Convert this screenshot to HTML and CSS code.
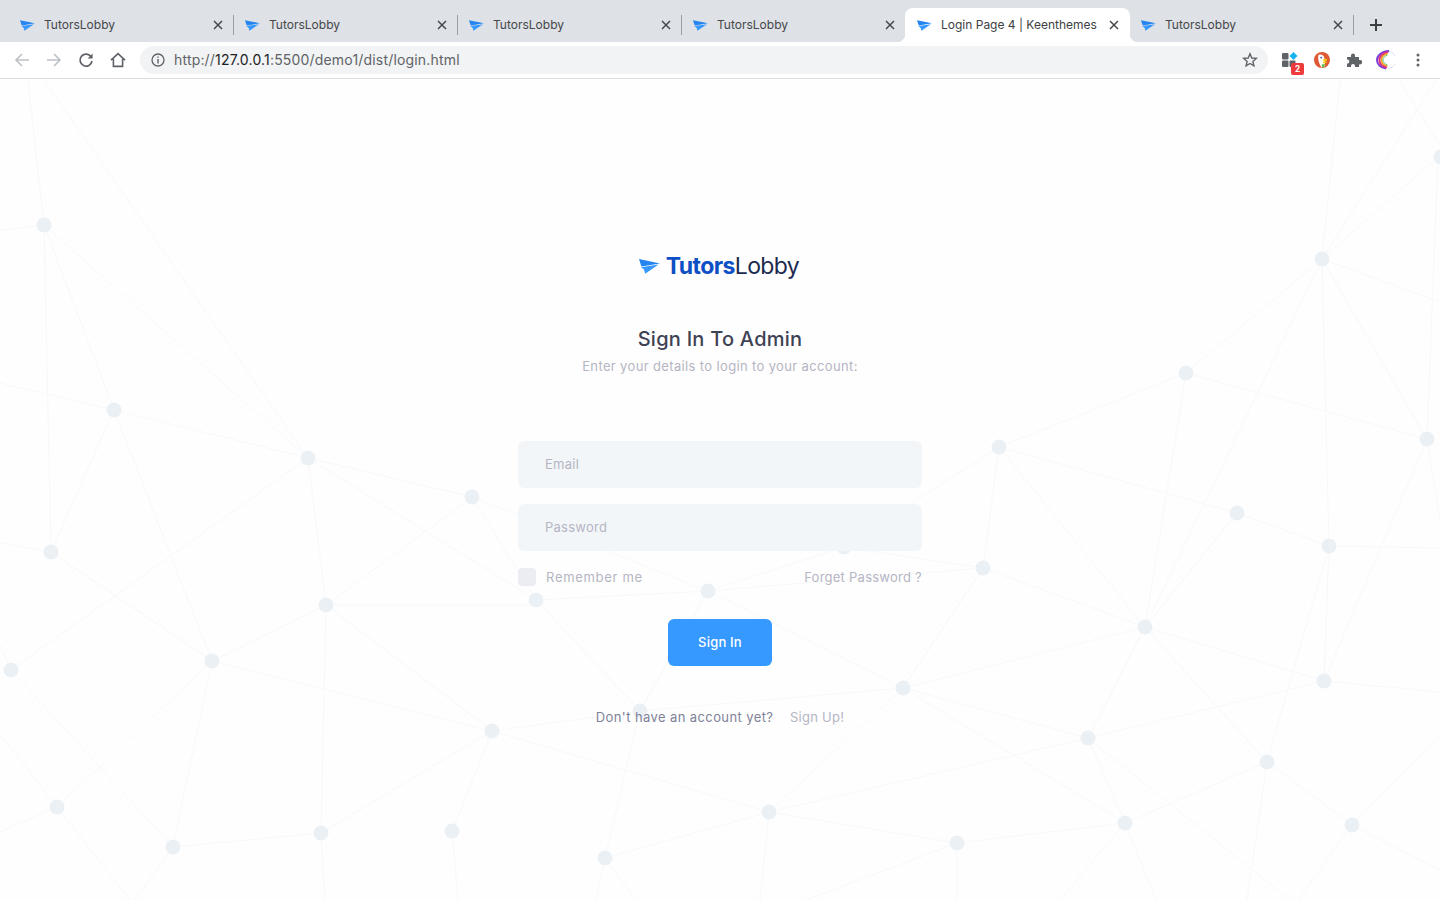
FILE: index.html
```html
<!DOCTYPE html>
<html lang="en">
  <head>
    <meta charset="UTF-8" />
    <title>Login Page 4 | Keenthemes</title>
    <link rel="stylesheet" href="styles.css">
  </head>
  <body>
    <svg width="0" height="0" class="defs">
      <symbol id="plane" viewBox="0 0 21 15">
        <path d="M0 0 L21 4.4 L2.4 7.6 Z" fill="#2484f0"/>
        <path d="M2 8.3 L19.5 5.6 L6.2 14.8 L5 10.6 Z" fill="#3699ff"/>
      </symbol>
      <symbol id="x" viewBox="0 0 10 10">
        <path d="M1 1 L9 9 M9 1 L1 9" stroke="#45474a" stroke-width="1.5" fill="none"/>
      </symbol>
    </svg>

    <div class="tabstrip">
      <div class="tab"><svg class="fav"><use href="#plane"/></svg><span class="tab-title">TutorsLobby</span><svg class="tab-x"><use href="#x"/></svg></div>
      <div class="tab"><svg class="fav"><use href="#plane"/></svg><span class="tab-title">TutorsLobby</span><svg class="tab-x"><use href="#x"/></svg></div>
      <div class="tab"><svg class="fav"><use href="#plane"/></svg><span class="tab-title">TutorsLobby</span><svg class="tab-x"><use href="#x"/></svg></div>
      <div class="tab"><svg class="fav"><use href="#plane"/></svg><span class="tab-title">TutorsLobby</span><svg class="tab-x"><use href="#x"/></svg></div>
      <div class="tab active"><svg class="fav"><use href="#plane"/></svg><span class="tab-title">Login Page 4 | Keenthemes</span><svg class="tab-x"><use href="#x"/></svg></div>
      <div class="tab last"><svg class="fav"><use href="#plane"/></svg><span class="tab-title">TutorsLobby</span><svg class="tab-x"><use href="#x"/></svg></div>
      <svg class="newtab" viewBox="0 0 12 12"><path d="M6 0 V12 M0 6 H12" stroke="#3c4043" stroke-width="2"/></svg>
    </div>

    <div class="toolbar">
      <svg class="tool" viewBox="0 0 16 16"><path d="M15 8 H2 M8 2 L2 8 L8 14" stroke="#bdc1c6" stroke-width="1.6" fill="none"/></svg>
      <svg class="tool" viewBox="0 0 16 16"><path d="M1 8 H14 M8 2 L14 8 L8 14" stroke="#bdc1c6" stroke-width="1.6" fill="none"/></svg>
      <svg class="tool" viewBox="0 0 16 16"><path d="M13.2 5 A6 6 0 1 0 14 9" stroke="#5f6368" stroke-width="1.7" fill="none"/><path d="M14.6 1.4 V6.4 H9.6 Z" fill="#5f6368"/></svg>
      <svg class="tool" viewBox="0 0 16 16"><path d="M1 8.2 L8 1.6 L15 8.2 M3.4 7 V14.4 H12.6 V7" stroke="#5f6368" stroke-width="1.6" fill="none"/></svg>
      <div class="omnibox">
        <svg class="info" viewBox="0 0 14 14"><circle cx="7" cy="7" r="6" stroke="#5f6368" stroke-width="1.3" fill="none"/><path d="M7 6 V10.4 M7 3.4 V4.8" stroke="#5f6368" stroke-width="1.4"/></svg>
        <span class="url">http://<b>127.0.0.1</b>:5500/demo1/dist/login.html</span>
        <svg class="star" viewBox="0 0 16 16"><path d="M8 1.8 L9.8 6 L14.3 6.4 L10.9 9.4 L11.9 13.8 L8 11.5 L4.1 13.8 L5.1 9.4 L1.7 6.4 L6.2 6 Z" stroke="#5f6368" stroke-width="1.4" fill="none"/></svg>
      </div>
      <div class="exts">
        <div class="ext">
          <svg viewBox="0 0 16 16"><rect x="0" y="1" width="6.5" height="6.5" rx="1" fill="#5f6368"/><rect x="0" y="8.5" width="6.5" height="6.5" rx="1" fill="#5f6368"/><rect x="7.5" y="8.5" width="6" height="6.5" rx="1" fill="#5f6368"/><path d="M11.5 0 L15.5 4 L11.5 8 L7.5 4 Z" fill="#19b5f1"/></svg>
          <span class="badge">2</span>
        </div>
        <div class="ext">
          <svg viewBox="0 0 16 16"><circle cx="8" cy="8" r="8" fill="#de5833"/><path d="M4.5 2.8 C8 1.6 10.4 3.8 10.4 6.6 L11 14.6 L7.4 15.6 C5.8 12.6 3.2 8 4.5 2.8 Z" fill="#fff"/><circle cx="7.2" cy="5.6" r="0.9" fill="#2d4f8e"/><path d="M8.6 7.6 L13 6.8 L13 8.4 L9.4 9.2 Z M8.8 9.8 L12.6 9.4 L12.6 10.8 L9.4 11.4 Z" fill="#fdd20a"/><path d="M7.6 12.4 L10.6 12 L10.6 15 L8.2 15.6 Z" fill="#65bc46"/></svg>
        </div>
        <div class="ext">
          <svg viewBox="0 0 16 16"><path d="M1 5 H5 V3.4 A2 2 0 0 1 9 3.4 V5 H13 V8 H14 A2.2 2.2 0 0 1 14 12.4 H13 V15 H9 V14 A2 2 0 0 0 5 14 V15 H1 V11.6 H2 A2.2 2.2 0 0 0 2 7.6 H1 Z" fill="#5f6368"/></svg>
        </div>
        <div class="ext">
          <svg class="swirl" viewBox="0 0 20 20"><path d="M13 1 A9 9 0 0 1 19 6" stroke="#d8e4f6" stroke-width="1" fill="none"/><path d="M12 18.5 A9 9 0 0 0 19 14" stroke="#e6e2f6" stroke-width="1" fill="none"/><path d="M13 1 C5 1.5 1 6 1 10 C1 14 4.5 18 10 18.5" stroke="#7a3fd6" stroke-width="2" fill="none"/><path d="M12 2 C6.5 3.5 3.4 6.6 3.4 10 C3.4 13.4 6 16.4 11 17.4" stroke="#e0347a" stroke-width="2" fill="none"/><path d="M11.5 3.6 C7.4 5 5.4 7.4 5.4 10 C5.4 12.6 7.4 15 11.4 16" stroke="#f0a020" stroke-width="1.6" fill="none"/><path d="M11.5 5 C8.6 6.2 7 8 7 10 C7 12 8.6 13.8 11.4 14.8" stroke="#62c46a" stroke-width="1" fill="none"/></svg>
        </div>
        <div class="ext">
          <svg viewBox="0 0 16 16"><circle cx="8" cy="3" r="1.5" fill="#5f6368"/><circle cx="8" cy="8" r="1.5" fill="#5f6368"/><circle cx="8" cy="13" r="1.5" fill="#5f6368"/></svg>
        </div>
      </div>
    </div>

    <div class="page">
      <svg class="network" viewBox="0 0 1440 821">
        <g class="links" transform="translate(0 -79)">
          <path d="M28 80L44 225M44 80L308 458M0 230L44 225M44 225L308 458M44 225L114 410M44 225L51 552M114 410L51 552M114 410L308 458M0 383L114 410M114 410L212 661M308 458L11 670M308 458L472 497M308 458L326 605M308 458L536 600M472 497L326 605M472 497L536 600M472 497L708 591M0 543L51 552M51 552L212 661M326 605L212 661M326 605L536 605M326 605L321 833M326 605L492 731M536 600L708 591M536 600L640 711M708 591L640 711M708 591L903 688M708 591L844 547M708 591L983 568M212 661L492 731M212 661L173 847M212 661L57 807M11 670L173 847M0 645L11 670M0 734L57 807M57 807L130 900M173 847L135 900M57 807L0 832M173 847L321 833M321 833L492 731M321 833L325 900M452 831L492 731M452 831L458 900M492 731L640 711M492 731L769 812M640 711L605 858M640 711L903 688M605 858L769 812M605 858L596 900M605 858L636 900"/>
          <path d="M1340 80L1322 259M1436 80L1322 259M1399 80L1440 145M1438 157L1322 259M1438 157L1427 439M1322 259L1186 373M1322 259L1145 627M1322 259L1329 546M1322 259L1427 439M1322 259L1440 302M1186 373L999 447M1186 373L1145 627M1186 373L1427 439M999 447L983 568M999 447L1145 627M999 447L1237 513M999 447L844 547M1237 513L1145 627M1237 513L1329 546M1329 546L1324 681M1329 546L1440 548M1427 439L1324 681M1427 439L1440 520M1329 546L1267 762M983 568L903 688M983 568L1145 627M983 568L844 547M1145 627L903 688M1145 627L1088 738M1145 627L1267 762M1145 627L1324 681M1324 681L1088 738M1324 681L1440 692M903 688L1088 738M903 688L769 812M903 688L1125 823M1088 738L1125 823M1088 738L769 812M1088 738L1290 900M1267 762L1125 823M1267 762L1352 825M1267 762L1247 900M769 812L957 843M769 812L760 900M957 843L1125 823M957 843L957 900M957 843L806 900M1125 823L1060 900M1125 823L1156 900M1352 825L1298 900M1352 825L1440 870M1352 825L1440 735"/>
        </g>
        <g class="nodes" transform="translate(0 -79)">
          <circle cx="44" cy="225" r="7.5"/><circle cx="114" cy="410" r="7.5"/><circle cx="308" cy="458" r="7.5"/><circle cx="472" cy="497" r="7.5"/><circle cx="51" cy="552" r="7.5"/><circle cx="326" cy="605" r="7.5"/><circle cx="536" cy="600" r="7.5"/><circle cx="708" cy="591" r="7.5"/><circle cx="212" cy="661" r="7.5"/><circle cx="11" cy="670" r="7.5"/><circle cx="492" cy="731" r="7.5"/><circle cx="640" cy="711" r="7.5"/><circle cx="57" cy="807" r="7.5"/><circle cx="173" cy="847" r="7.5"/><circle cx="321" cy="833" r="7.5"/><circle cx="452" cy="831" r="7.5"/><circle cx="605" cy="858" r="7.5"/><circle cx="844" cy="547" r="7.5"/>
          <circle cx="1322" cy="259" r="7.5"/><circle cx="1186" cy="373" r="7.5"/><circle cx="999" cy="447" r="7.5"/><circle cx="1237" cy="513" r="7.5"/><circle cx="1329" cy="546" r="7.5"/><circle cx="1427" cy="439" r="7.5"/><circle cx="983" cy="568" r="7.5"/><circle cx="1145" cy="627" r="7.5"/><circle cx="903" cy="688" r="7.5"/><circle cx="1324" cy="681" r="7.5"/><circle cx="1088" cy="738" r="7.5"/><circle cx="1267" cy="762" r="7.5"/><circle cx="769" cy="812" r="7.5"/><circle cx="957" cy="843" r="7.5"/><circle cx="1125" cy="823" r="7.5"/><circle cx="1352" cy="825" r="7.5"/><circle cx="1441" cy="157" r="7.5"/>
        </g>
      </svg>

      <div class="login">
        <div class="logo">
          <svg class="logo-icon"><use href="#plane"/></svg>
          <span class="logo-text"><b>Tutors</b>Lobby</span>
        </div>
        <h3 class="title">Sign In To Admin</h3>
        <p class="subtitle">Enter your details to login to your account:</p>
        <form class="form">
          <input class="field" type="text" placeholder="Email" />
          <input class="field" type="password" placeholder="Password" />
          <div class="options">
            <label class="remember"><span class="check"></span>Remember me</label>
            <a class="forgot">Forget Password ?</a>
          </div>
          <button class="btn" type="button">Sign In</button>
        </form>
        <div class="signup">
          <span class="signup-q">Don't have an account yet?</span>
          <a class="signup-link">Sign Up!</a>
        </div>
      </div>
    </div>
  </body>
</html>
```

FILE: styles.css
```css
html,
body {
  margin: 0;
  height: 100%;
  overflow: hidden;
}

body {
  font-family: "Inter", "Liberation Sans", sans-serif;
  background-color: #ffffff;
  display: flex;
  flex-direction: column;
}

.defs {
  position: absolute;
}

/* Browser tabs */
.tabstrip {
  height: 42px;
  flex: none;
  background-color: #dee1e6;
  display: flex;
  align-items: flex-end;
  padding-left: 9px;
  box-sizing: border-box;
}

.tab {
  width: 224px;
  height: 34px;
  flex: none;
  box-sizing: border-box;
  padding: 0 11px 0 11px;
  display: flex;
  align-items: center;
  font-family: "Inter", "Liberation Sans", sans-serif;
  font-size: 12px;
  color: #45474a;
  position: relative;
}

.tab:first-child {
  width: 225px;
}

.tab::after {
  content: "";
  position: absolute;
  right: 0;
  top: 7px;
  height: 20px;
  width: 1px;
  background-color: #9aa0a6;
}

.tab:nth-child(4)::after {
  display: none;
}

.tab.active {
  width: 225px;
  margin-left: -1px;
  padding-left: 12px;
  background-color: #ffffff;
  border-radius: 8px 8px 0 0;
  color: #3c4043;
}

/* concave corners at the foot of the active tab */
.tab.active::before,
.tab.active::after {
  content: "";
  display: block;
  position: absolute;
  top: auto;
  bottom: 0;
  width: 8px;
  height: 8px;
  background-color: transparent;
}

.tab.active::before {
  left: -8px;
  background-image: radial-gradient(circle at 0 0, #dee1e6 8px, #ffffff 8.5px);
}

.tab.active::after {
  right: -8px;
  background-image: radial-gradient(circle at 100% 0, #dee1e6 8px, #ffffff 8.5px);
}

.fav {
  width: 15px;
  height: 11px;
  flex: none;
  margin-right: 9px;
}

.tab-title {
  flex: 1;
  white-space: nowrap;
  padding-bottom: 2px;
}

.tab-x {
  width: 10px;
  height: 10px;
  flex: none;
}

.newtab {
  width: 12px;
  height: 12px;
  margin: 0 0 11px 16px;
}

/* Toolbar */
.toolbar {
  height: 37px;
  flex: none;
  box-sizing: border-box;
  background-color: #ffffff;
  border-bottom: 1px solid #dadce0;
  display: flex;
  align-items: center;
  padding: 0 0 1px 14px;
}

.tool {
  width: 16px;
  height: 16px;
  margin-right: 16px;
  flex: none;
}

.omnibox {
  flex: 1;
  height: 28px;
  margin-left: -2px;
  background-color: #f1f3f4;
  border-radius: 14px;
  display: flex;
  align-items: center;
  padding: 0 10px 0 11px;
}

.info {
  width: 14px;
  height: 14px;
  margin-right: 9px;
}

.url {
  flex: 1;
  font-family: "Inter", "Liberation Sans", sans-serif;
  font-size: 14px;
  letter-spacing: 0.18px;
  color: #5f6368;
}

.url b {
  font-weight: 400;
  color: #202124;
}

.star {
  width: 16px;
  height: 16px;
}

.exts {
  display: flex;
  align-items: center;
  margin-left: 14px;
  padding-right: 14px;
}

.ext {
  width: 16px;
  height: 16px;
  margin-right: 16px;
  position: relative;
}

.ext:last-child {
  margin-right: 0;
}

.ext svg {
  display: block;
  width: 16px;
  height: 16px;
}

.ext svg.swirl {
  width: 20px;
  height: 20px;
  margin: -2px;
}

.badge {
  position: absolute;
  right: -6px;
  bottom: -7px;
  width: 13px;
  height: 12px;
  background-color: #ee3a3a;
  border-radius: 2px;
  color: #ffffff;
  font: 700 9px/12px "Roboto", sans-serif;
  text-align: center;
}

/* Page */
.page {
  flex: 1;
  position: relative;
  background-color: #fefefe;
  display: flex;
  justify-content: center;
}

.network {
  position: absolute;
  left: 0;
  top: 0;
  width: 1440px;
  height: 821px;
}

.links path {
  stroke: #f7f8fa;
  stroke-width: 1;
  fill: none;
}

.nodes circle {
  fill: #ebf0f5;
}

.login {
  position: relative;
  width: 404px;
  padding-top: 170px;
  display: flex;
  flex-direction: column;
  align-items: center;
}

.logo {
  display: flex;
  align-items: center;
  height: 34px;
  margin-left: -2px;
}

.logo-icon {
  width: 21px;
  height: 15px;
  margin-right: 6px;
}

.logo-text {
  font-size: 23px;
  letter-spacing: -0.6px;
  color: #1b2a4e;
}

.logo-text b {
  color: #0d4fc4;
  font-weight: 700;
}

.title {
  margin: 41px 0 0;
  font-size: 20px;
  line-height: 30px;
  font-weight: 500;
  letter-spacing: 0.25px;
  color: #3f4254;
}

.subtitle {
  margin: 2px 0 0;
  font-size: 13px;
  line-height: 20px;
  letter-spacing: 0.36px;
  color: #b5b5c3;
}

.form {
  width: 100%;
  margin-top: 65px;
  display: flex;
  flex-direction: column;
  align-items: center;
}

.field {
  width: 100%;
  height: 47px;
  box-sizing: border-box;
  border: none;
  border-radius: 6px;
  background-color: #f3f6f9;
  padding: 0 27px 2px;
  margin-bottom: 16px;
  font: 13px "Inter", sans-serif;
  letter-spacing: 0.25px;
  color: #3f4254;
}

.field::placeholder {
  color: #b5b5c3;
}

.options {
  width: 100%;
  display: flex;
  justify-content: space-between;
  align-items: center;
  height: 20px;
  font-size: 13px;
  color: #b5b5c3;
}

.remember {
  display: flex;
  align-items: center;
  letter-spacing: 0.7px;
}

.forgot {
  letter-spacing: 0.25px;
}

.check {
  width: 18px;
  height: 18px;
  border-radius: 4px;
  background-color: #ebedf3;
  margin-right: 10px;
}

.btn {
  width: 104px;
  height: 47px;
  margin-top: 32px;
  padding: 0 0 2px;
  border: none;
  border-radius: 6px;
  background-color: #3699ff;
  color: #ffffff;
  font: 500 13px "Inter", sans-serif;
  letter-spacing: 0.2px;
}

.signup {
  margin-top: 41px;
  font-size: 13px;
  line-height: 20px;
}

.signup-q {
  color: #7e8299;
  margin-right: 13px;
  letter-spacing: 0.4px;
}

.signup-link {
  color: #b5b5c3;
  letter-spacing: 0.25px;
}
```
